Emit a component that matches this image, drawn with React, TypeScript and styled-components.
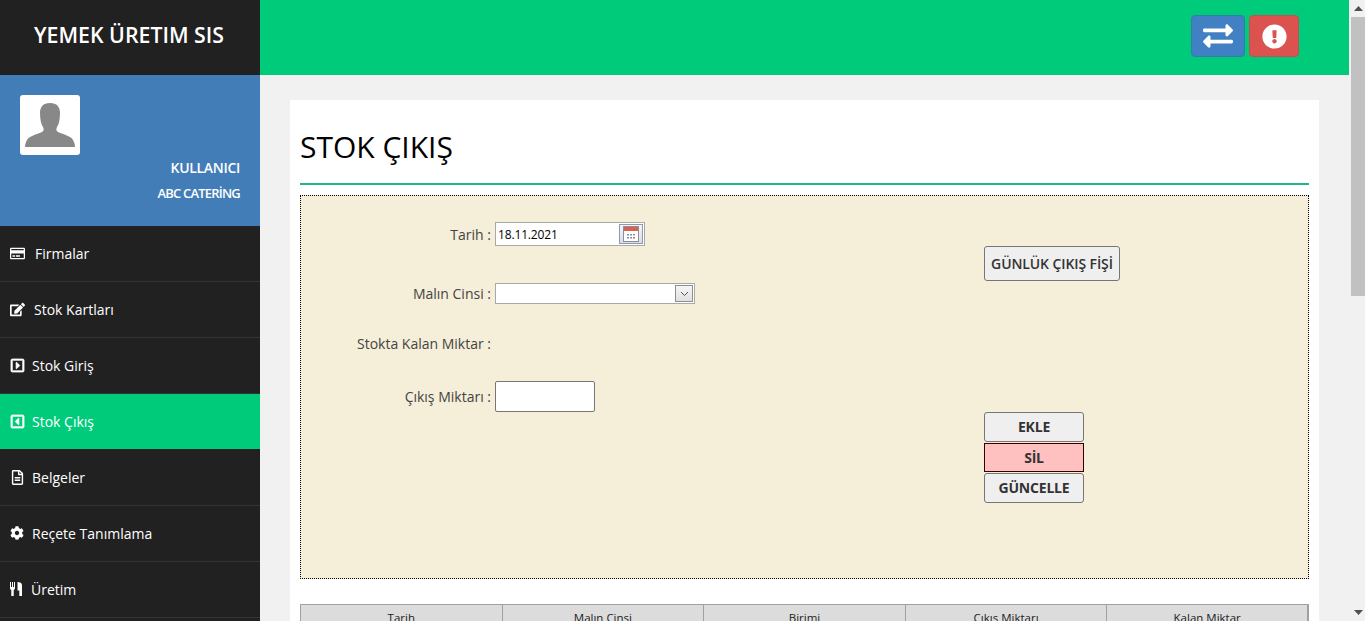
import styled, { createGlobalStyle } from 'styled-components';
import {
  FaRegCreditCard, FaEdit, FaRegCaretSquareRight, FaRegCaretSquareLeft,
  FaRegFileAlt, FaCog, FaExchangeAlt, FaExclamationCircle,
} from 'react-icons/fa';

const GlobalStyle = createGlobalStyle`
  html, body {
    margin: 0;
    height: 100%;
    overflow: hidden;
    background: #f1f1f1;
  }
  body, button, input, select {
    font-family: "Open Sans", "Liberation Sans", sans-serif;
  }
  * {
    box-sizing: border-box;
  }
`;

const Page = styled.div`
  display: flex;
  width: 1365px;
  height: 621px;
  overflow: hidden;
`;

const Viewport = styled.div`
  display: flex;
  flex: 1;
  min-width: 0;
`;

const Sidebar = styled.aside`
  flex: 0 0 260px;
  background: #212121;
  color: #fff;
`;

const Brand = styled.div`
  display: flex;
  align-items: center;
  justify-content: center;
  height: 75px;
  padding: 0 2px 7px 0;
  font-size: 21.3px;
  font-weight: 600;
  color: #fff;
`;

const UserPanel = styled.div`
  height: 151px;
  padding: 20px 20px 0;
  background: #437db7;
`;

const Avatar = styled.div`
  display: flex;
  align-items: flex-end;
  justify-content: center;
  width: 60px;
  height: 60px;
  padding-bottom: 8px;
  background: #fff;
  border-radius: 3px;
`;

const UserName = styled.div`
  margin-top: 3px;
  text-align: right;
  font-size: 14px;
  font-weight: 600;
  line-height: 19px;
  letter-spacing: -0.3px;
`;

const CompanyName = styled.div`
  margin-top: 7px;
  text-align: right;
  font-size: 13px;
  font-weight: 600;
  line-height: 18px;
  letter-spacing: -0.8px;
`;

const MenuItem = styled.a<{ $active?: boolean; $gap: number }>`
  display: flex;
  align-items: center;
  gap: ${(p) => p.$gap}px;
  height: 56px;
  padding-left: 10px;
  padding-bottom: 1px;
  font-size: 14px;
  color: #fff;
  background: ${(p) => (p.$active ? '#00cb7b' : 'transparent')};
  border-bottom: 1px solid ${(p) => (p.$active ? '#212121' : '#333')};
`;

const Content = styled.div`
  flex: 1;
  min-width: 0;
`;

const TopBar = styled.header`
  display: flex;
  align-items: flex-start;
  justify-content: flex-end;
  gap: 4px;
  height: 75px;
  padding: 15px 50px 0 0;
  background: #00cb7b;
`;

const TopButton = styled.button<{ $tone: 'blue' | 'red'; $w: number }>`
  display: flex;
  align-items: center;
  justify-content: center;
  width: ${(p) => p.$w}px;
  height: 42px;
  padding: 0;
  color: #fff;
  background: ${(p) => (p.$tone === 'blue' ? '#4280c4' : '#db524f')};
  border: 1px solid ${(p) => (p.$tone === 'blue' ? '#2f80a8' : '#b9554f')};
  border-radius: 4px;
`;

const Body = styled.main`
  padding: 25px 30px 0;
`;

const Card = styled.section`
  height: 600px;
  padding: 0 10px;
  background: #fff;
`;

const Title = styled.h1`
  margin: 0;
  height: 85px;
  padding-top: 26px;
  border-bottom: 2px solid #22b883;
  font-size: 30px;
  font-weight: 400;
  line-height: 41px;
  color: #000;
`;

const FormPanel = styled.div`
  display: flex;
  height: 384px;
  margin-top: 10px;
  background: #f5eed8;
  border: 1px dotted #000;
`;

const Fields = styled.div`
  flex: 0 0 683px;
`;

const FieldRow = styled.div<{ $h: number }>`
  display: flex;
  align-items: center;
  gap: 4px;
  height: ${(p) => p.$h}px;
`;

const Label = styled.label`
  flex: 0 0 190px;
  text-align: right;
  font-size: 14px;
  color: #444;
`;

const DateBox = styled.div`
  display: flex;
  align-items: center;
  justify-content: space-between;
  width: 150px;
  height: 24px;
  padding: 0 1px 0 2px;
  background: #fff;
  border: 1px solid #a9a9a9;
  font-size: 12px;
  letter-spacing: -0.15px;
  color: #000;
`;

const CalendarButton = styled.span`
  display: flex;
  align-items: center;
  justify-content: center;
  width: 24px;
  height: 20px;
  background: linear-gradient(#f4f6f9, #d8dee6);
  border: 1px solid #8e9aa8;
`;

const SelectBox = styled.div`
  display: flex;
  align-items: center;
  justify-content: flex-end;
  width: 200px;
  height: 21px;
  padding-right: 1px;
  background: #fff;
  border: 1px solid #a9a9a9;
`;

const SelectArrow = styled.span`
  display: flex;
  align-items: center;
  justify-content: center;
  width: 18px;
  height: 17px;
  background: linear-gradient(#f6f6f6, #e0e0e0);
  border: 1px solid #8e8e8e;
`;

const AmountInput = styled.input`
  width: 100px;
  height: 31px;
  padding: 0 4px;
  background: #fff;
  border: 1px solid #767676;
  border-radius: 2px;
`;

const Actions = styled.div`
  display: flex;
  flex-direction: column;
  align-items: flex-start;
  padding-top: 50px;
`;

const ReportButton = styled.button`
  width: 136px;
  height: 35px;
  padding: 0;
  margin-bottom: 131px;
  font-size: 14px;
  font-weight: 600;
  letter-spacing: -0.1px;
  color: #333;
  background: #efefef;
  border: 1px solid #767676;
  border-radius: 3px;
`;

const ActionButton = styled.button<{ $danger?: boolean }>`
  width: 100px;
  height: ${(p) => (p.$danger ? '29px' : '30px')};
  margin: ${(p) => (p.$danger ? '1px 0' : '0')};
  padding: 0 0 1px;
  font-size: 14px;
  font-weight: 700;
  letter-spacing: -0.2px;
  color: #333;
  background: ${(p) => (p.$danger ? '#ffc0c0' : '#efefef')};
  border: 1px solid ${(p) => (p.$danger ? '#300' : '#767676')};
  border-radius: ${(p) => (p.$danger ? '0' : '3px')};
`;

const ListTable = styled.div`
  display: grid;
  grid-template-columns: repeat(5, 1fr);
  margin-top: 25px;
  border-top: 1px solid #a0a0a0;
  border-left: 1px solid #a0a0a0;
  background: #dcdcdc;
`;

const HeaderCell = styled.div`
  height: 24px;
  padding-top: 5px;
  text-align: center;
  font-size: 11.5px;
  line-height: 16px;
  color: #222;
  border-right: 1px solid #a0a0a0;
  &:last-child {
    border-right-width: 2px;
  }
`;

const ScrollBar = styled.div`
  display: flex;
  flex-direction: column;
  flex: 0 0 16px;
  background: #f1f1f1;
`;

const ScrollArrow = styled.div`
  display: flex;
  align-items: center;
  justify-content: center;
  height: 17px;
  padding-left: 2px;
`;

const ScrollTrack = styled.div`
  flex: 1;
  padding-left: 2px;
`;

const ScrollThumb = styled.div`
  height: 279px;
  background: #c1c1c1;
`;

const UtensilsIcon = () => (
  <svg width="12" height="14" viewBox="0 0 12 14" fill="currentColor">
    <path d="M0 0h1v5h1V0h1v5h1V0h1v6c0 1-.7 2-1.3 2v6H1.3V8C.7 8 0 7 0 6z" />
    <path d="M7.500 0c2.500 0 4.500 1 4.500 3v11H9.300V8.500H7.500z" />
  </svg>
);

// the reference's outline icons are heavier than the stock glyphs
const heavy = { stroke: 'currentColor', strokeWidth: 24 };

const menu = [
  { label: 'Firmalar', icon: <FaRegCreditCard size={15} />, gap: 10 },
  { label: 'Stok Kartları', icon: <FaEdit size={15} />, gap: 9 },
  { label: 'Stok Giriş', icon: <FaRegCaretSquareRight size={15} {...heavy} />, gap: 7 },
  { label: 'Stok Çıkış', icon: <FaRegCaretSquareLeft size={15} {...heavy} />, gap: 7, active: true },
  { label: 'Belgeler', icon: <FaRegFileAlt size={15} />, gap: 7 },
  { label: 'Reçete Tanımlama', icon: <FaCog size={14} />, gap: 8 },
  { label: 'Üretim', icon: <UtensilsIcon />, gap: 9 },
];

const columns = ['Tarih', 'Malın Cinsi', 'Birimi', 'Çıkış Miktarı', 'Kalan Miktar'];

const App = () => (
  <>
    <GlobalStyle />
    <Page>
      <Viewport>
        <Sidebar>
          <Brand>YEMEK ÜRETIM SIS</Brand>
          <UserPanel>
            <Avatar>
              <svg width="50" height="44" viewBox="0 0 50 44" fill="#888">
                <path d="M25 0c-7 0-10 4-10 10 0 6 1 11 3 14 1 2 1 4-1 5-4 2-13 4-15 8-1 2-2 4-2 7h50c0-3-1-5-2-7-2-4-11-6-15-8-2-1-2-3-1-5 2-3 3-8 3-14 0-6-3-10-10-10z" />
              </svg>
            </Avatar>
            <UserName>KULLANICI</UserName>
            <CompanyName>ABC CATERİNG</CompanyName>
          </UserPanel>
          {menu.map(({ label, icon, gap, active }) => (
            <MenuItem key={label} $active={active} $gap={gap}>
              {icon}
              {label}
            </MenuItem>
          ))}
        </Sidebar>
        <Content>
          <TopBar>
            <TopButton $tone="blue" $w={54}><FaExchangeAlt size={30} /></TopButton>
            <TopButton $tone="red" $w={50}><FaExclamationCircle size={25} /></TopButton>
          </TopBar>
          <Body>
            <Card>
              <Title>STOK ÇIKIŞ</Title>
              <FormPanel>
                <Fields>
                  <FieldRow $h={76}>
                    <Label>Tarih :</Label>
                    <DateBox>
                      18.11.2021
                      <CalendarButton>
                        <svg width="16" height="16" viewBox="0 0 16 16">
                          <rect x="0.5" y="0.5" width="15" height="15" fill="#fff" stroke="#8a8f9a" />
                          <rect x="1" y="1" width="14" height="4" fill="#d9614f" />
                          <path d="M4 8h2v1.500H4zM7 8h2v1.500H7zM10 8h2v1.500h-2zM4 11h2v1.500H4zM7 11h2v1.500H7z" fill="#7f8cb0" />
                          <path d="M10 11h2v1.500h-2z" fill="#d9614f" />
                        </svg>
                      </CalendarButton>
                    </DateBox>
                  </FieldRow>
                  <FieldRow $h={43}>
                    <Label>Malın Cinsi :</Label>
                    <SelectBox>
                      <SelectArrow>
                        <svg width="9" height="6" viewBox="0 0 9 6" fill="none" stroke="#555">
                          <path d="M1 1l3.500 3.500L8 1" />
                        </svg>
                      </SelectArrow>
                    </SelectBox>
                  </FieldRow>
                  <FieldRow $h={56}>
                    <Label>Stokta Kalan Miktar :</Label>
                  </FieldRow>
                  <FieldRow $h={51}>
                    <Label>Çıkış Miktarı :</Label>
                    <AmountInput />
                  </FieldRow>
                </Fields>
                <Actions>
                  <ReportButton>GÜNLÜK ÇIKIŞ FİŞİ</ReportButton>
                  <ActionButton>EKLE</ActionButton>
                  <ActionButton $danger>SİL</ActionButton>
                  <ActionButton>GÜNCELLE</ActionButton>
                </Actions>
              </FormPanel>
              <ListTable>
                {columns.map((c) => <HeaderCell key={c}>{c}</HeaderCell>)}
              </ListTable>
            </Card>
          </Body>
        </Content>
      </Viewport>
      <ScrollBar>
        <ScrollArrow>
          <svg width="9" height="5" viewBox="0 0 9 5" fill="#505050"><path d="M4.500 0L9 5H0z" /></svg>
        </ScrollArrow>
        <ScrollTrack><ScrollThumb /></ScrollTrack>
        <ScrollArrow>
          <svg width="9" height="5" viewBox="0 0 9 5" fill="#505050"><path d="M0 0h9L4.500 5z" /></svg>
        </ScrollArrow>
      </ScrollBar>
    </Page>
  </>
);

export default App;
